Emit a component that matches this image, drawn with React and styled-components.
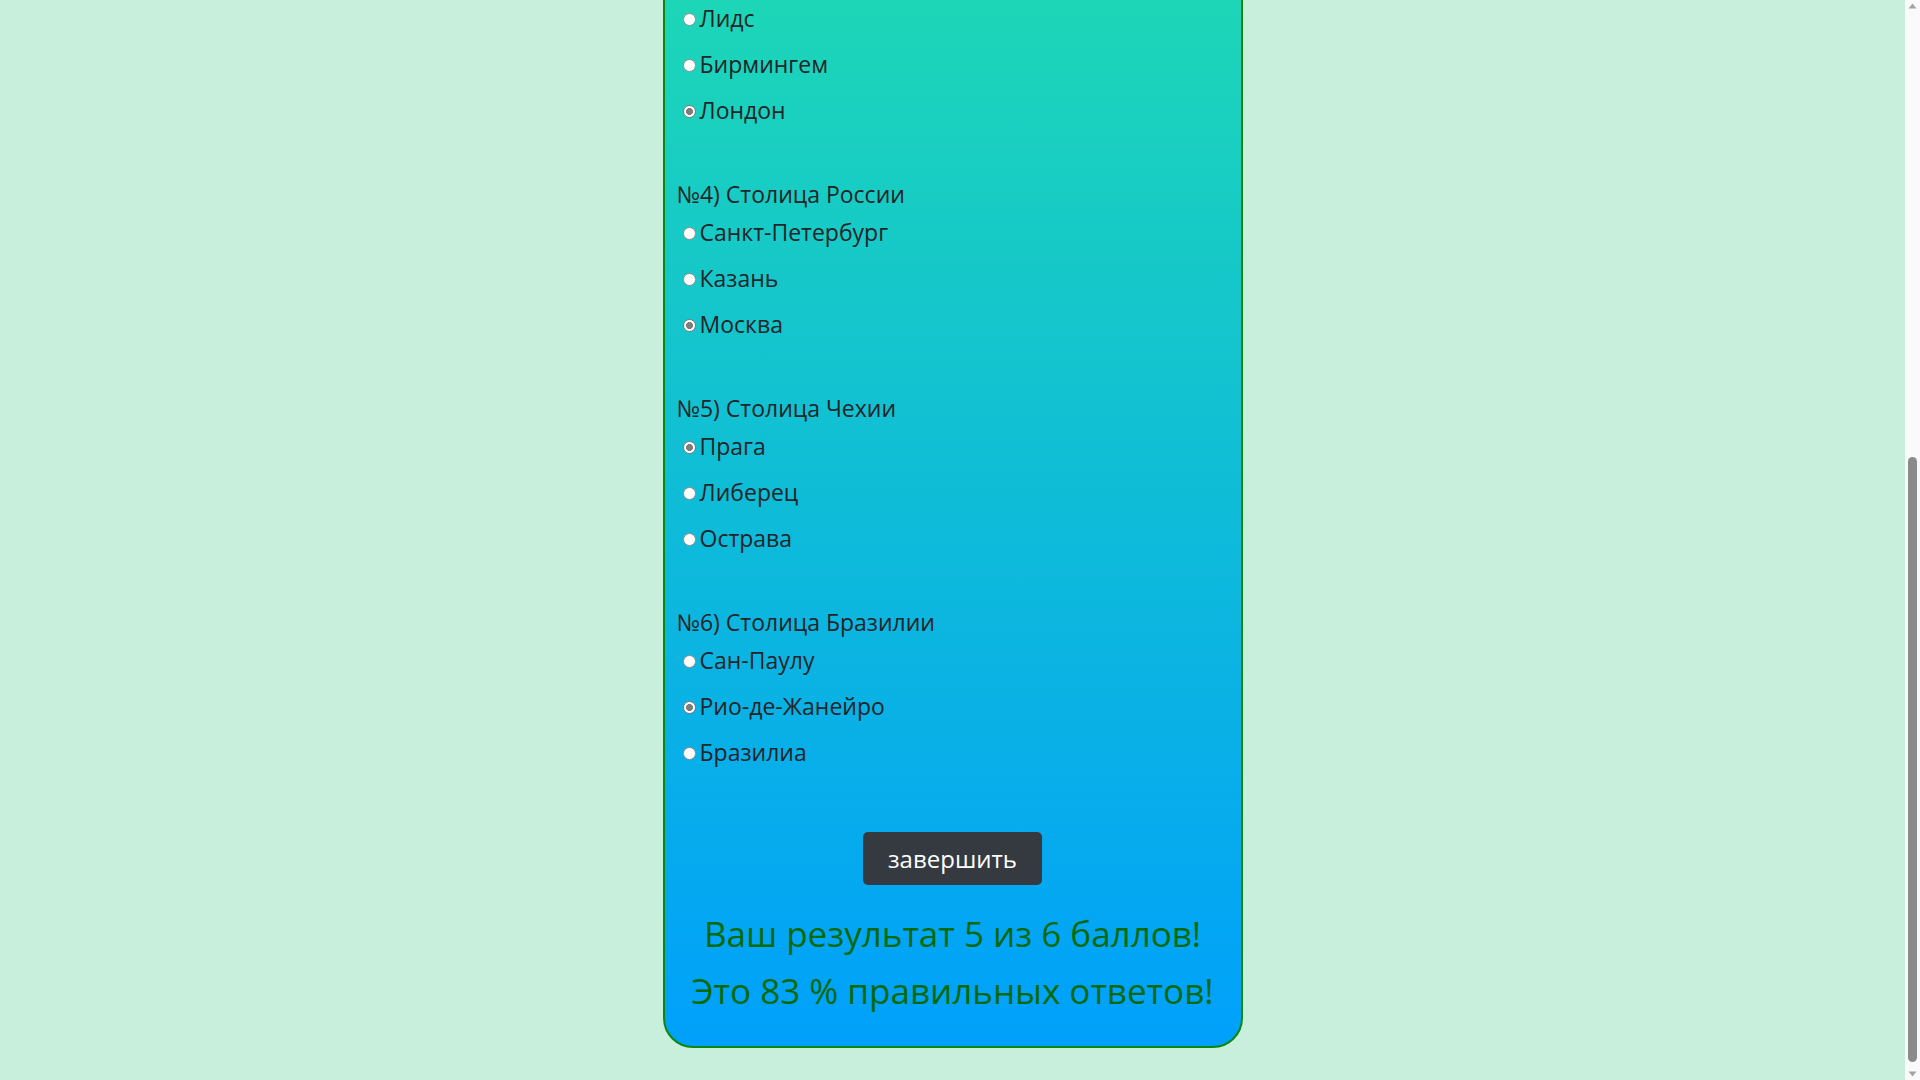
import React, { useLayoutEffect, useEffect } from "react";
import styled, { createGlobalStyle } from "styled-components";

const GlobalStyle = createGlobalStyle`
  html, body {
    margin: 0;
    padding: 0;
  }
  body {
    background: #c8efdb;
    font-family: "Open Sans", "Noto Sans", "DejaVu Sans", sans-serif;
    color: #212529;
  }
`;

const Page = styled.div`
  display: flex;
  justify-content: center;
  padding: 8px 15px 32px 0;
`;

const Card = styled.form`
  width: 580px;
  box-sizing: border-box;
  border: 2px solid #0b870f;
  border-radius: 30px;
  background: linear-gradient(180deg, #33ff84 0%, #00a0fb 100%);
  padding: 10px 12px 34px 12px;
  display: flex;
  flex-direction: column;
`;

const Header = styled.div`
  display: flex;
  flex-direction: column;
  margin-bottom: 90px;
`;

const Heading = styled.h1`
  margin: 20px 0 20px;
  font-size: 40px;
  line-height: 48px;
  font-weight: 400;
  text-align: center;
`;

const Intro = styled.p`
  margin: 0 0 20px;
  font-size: 23px;
  line-height: 32px;
`;

const NameLabel = styled.label`
  font-size: 23px;
  line-height: 32px;
  display: flex;
  flex-direction: column;
  gap: 8px;
`;

const NameInput = styled.input`
  height: 44px;
  box-sizing: border-box;
  border: 1px solid #8a8a8a;
  border-radius: 4px;
  font: inherit;
  font-size: 20px;
  padding: 0 10px;
`;

const Question = styled.fieldset`
  border: none;
  margin: 0 0 52px;
  padding: 0;
  min-width: 0;
  display: flex;
  flex-direction: column;

  &:last-of-type {
    margin-bottom: 0;
  }
`;

const QuestionTitle = styled.legend`
  padding: 0;
  font-size: 23px;
  line-height: 32px;
  height: 32px;
  float: left;
  width: 100%;
`;

const Options = styled.div`
  display: flex;
  flex-direction: column;
  gap: 14px;
  margin-top: 6px;
`;

const OptionLabel = styled.label`
  display: flex;
  align-items: center;
  font-size: 23px;
  line-height: 32px;
  height: 32px;
`;

const Radio = styled.input.attrs({ type: "radio" })`
  appearance: none;
  -webkit-appearance: none;
  width: 13px;
  height: 13px;
  box-sizing: border-box;
  margin: 3px 4px 0 6px;
  border-radius: 50%;
  border: 1px solid #8d8d8d;
  background: #fff;
  flex: none;

  &:checked {
    border: 1.5px solid #7b7b7b;
    background: radial-gradient(circle, #7d7d7d 0 3.2px, #ffffff 3.8px);
  }
`;

const Footer = styled.div`
  display: flex;
  flex-direction: column;
  align-items: center;
  margin-top: 64px;
`;

const FinishButton = styled.button`
  height: 53px;
  padding: 0 25px;
  border: none;
  border-radius: 5px;
  background: #343a40;
  color: #ffffff;
  font-family: inherit;
  font-size: 24px;
  line-height: 53px;
  margin-bottom: 27px;
`;

const Result = styled.div`
  display: flex;
  flex-direction: column;
  align-items: center;
  gap: 14px;
`;

const ResultLine = styled.p`
  margin: 0;
  font-size: 35px;
  line-height: 43px;
  color: #06690a;
  white-space: nowrap;
`;

const Scrollbar = styled.div`
  position: fixed;
  top: 0;
  right: 0;
  width: 15px;
  height: 100vh;
  background: #fafafa;
  z-index: 10;
`;

const ScrollArrow = styled.svg`
  position: absolute;
  left: 3px;
  width: 9px;
  height: 6px;
  ${(p) => (p.$down ? "bottom: 3px;" : "top: 3px;")}
`;

const ScrollThumb = styled.div`
  position: absolute;
  left: 3px;
  top: 457px;
  width: 9px;
  height: 605px;
  border-radius: 5px;
  background: #8b8b8b;
`;

const questions = [
  {
    title: "№1) Столица Франции",
    options: ["Париж", "Лион", "Марсель"],
    answer: 0,
  },
  {
    title: "№2) Столица Германии",
    options: ["Мюнхен", "Берлин", "Гамбург"],
    answer: 1,
  },
  {
    title: "№3) Столица Великобритании",
    options: ["Лидс", "Бирмингем", "Лондон"],
    answer: 2,
  },
  {
    title: "№4) Столица России",
    options: ["Санкт-Петербург", "Казань", "Москва"],
    answer: 2,
  },
  {
    title: "№5) Столица Чехии",
    options: ["Прага", "Либерец", "Острава"],
    answer: 0,
  },
  {
    title: "№6) Столица Бразилии",
    options: ["Сан-Паулу", "Рио-де-Жанейро", "Бразилиа"],
    answer: 1,
  },
];

export default function App() {
  const scrollDown = () => {
    window.scrollTo(0, document.documentElement.scrollHeight);
  };
  useLayoutEffect(scrollDown, []);
  useEffect(() => {
    scrollDown();
    const id = requestAnimationFrame(scrollDown);
    const t = setTimeout(scrollDown, 50);
    return () => {
      cancelAnimationFrame(id);
      clearTimeout(t);
    };
  }, []);

  return (
    <>
      <GlobalStyle />
      <Page>
        <Card onSubmit={(e) => e.preventDefault()}>
          <Header>
            <Heading>Тест: столицы мира</Heading>
            <Intro>Выберите правильный ответ в каждом вопросе.</Intro>
            <NameLabel>
              Ваше имя
              <NameInput defaultValue="Иван" readOnly />
            </NameLabel>
          </Header>
          {questions.map((q, qi) => (
            <Question key={q.title}>
              <QuestionTitle>{q.title}</QuestionTitle>
              <Options>
                {q.options.map((opt, oi) => (
                  <OptionLabel key={opt}>
                    <Radio
                      name={`q${qi}`}
                      defaultChecked={oi === q.answer}
                      disabled
                    />
                    {opt}
                  </OptionLabel>
                ))}
              </Options>
            </Question>
          ))}
          <Footer>
            <FinishButton type="button">завершить</FinishButton>
            <Result>
              <ResultLine>Ваш результат 5 из 6 баллов!</ResultLine>
              <ResultLine>Это 83 % правильных ответов!</ResultLine>
            </Result>
          </Footer>
        </Card>
      </Page>
      <Scrollbar aria-hidden="true">
        <ScrollArrow viewBox="0 0 9 6">
          <path d="M4.5 0.5 L8.5 5.5 L0.5 5.5 Z" fill="#a3a3a3" />
        </ScrollArrow>
        <ScrollThumb />
        <ScrollArrow viewBox="0 0 9 6" $down>
          <path d="M0.5 0.5 L8.5 0.5 L4.5 5.5 Z" fill="#a3a3a3" />
        </ScrollArrow>
      </Scrollbar>
    </>
  );
}
